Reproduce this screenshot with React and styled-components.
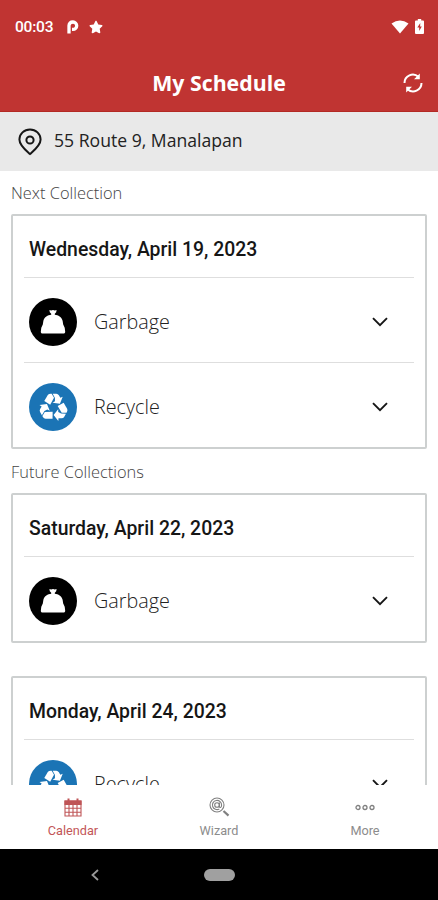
import React from "react";
import styled, { createGlobalStyle } from "styled-components";
import { FaStar } from "react-icons/fa";

const collections = [
  {
    label: "Next Collection",
    days: [{ date: "Wednesday, April 19, 2023", items: ["Garbage", "Recycle"] }],
  },
  {
    label: "Future Collections",
    days: [
      { date: "Saturday, April 22, 2023", items: ["Garbage"] },
      { date: "Monday, April 24, 2023", items: ["Recycle"] },
    ],
  },
];

const BagIcon = () => (
  <svg width="26" height="26" viewBox="0 0 26 26" fill="#fff">
    <path d="M9.400 1l1.800.6 1.800-.5 1.800.5 1.800-.6-.4 2.200-1.400 1.500v1.100c3.400.3 6.900 2.200 7.800 6l.6 3.600 1.500 3.300.5 4c0 1.200-.6 1.800-1.800 1.800H2.600c-1.200 0-1.800-.6-1.800-1.800l.5-4 1.500-3.300.6-3.600C4.300 8 7.800 6.100 11.200 5.800V4.700L9.800 3.200z" />
  </svg>
);

const RecycleIcon = () => (
  <svg width="29" height="29" viewBox="0 0 28 28" fill="#fff">
    {[0, 120, 240].map((angle) => (
      <g key={angle} transform={`rotate(${angle} 14 15)`}>
        <path d="M5.100 8.800L8.500 3Q9.400 1.600 11.300 1.600H12.200L14.500 5.600L10.800 12.200z" />
        <path d="M13.200 1.600H16.700Q18.300 1.600 19.200 3.100L20.600 5.600L22.900 4.500L20.200 11.300L13.100 10.300L15.400 8.900V5.700z" />
      </g>
    ))}
  </svg>
);

const Chevron = () => (
  <svg width="16" height="10" viewBox="0 0 16 10" fill="none" stroke="#161616" strokeWidth="1.9">
    <path d="M1 1.200l7 7L15 1.200" />
  </svg>
);

const PinIcon = () => (
  <svg width="24" height="28" viewBox="0 0 24 28" fill="none" stroke="#161616" strokeWidth="2">
    <path d="M12 26C8 22.500 1.400 17.500 1.400 11.500a10.600 10.100 0 0 1 21.200 0C22.600 17.500 16 22.500 12 26z" />
    <circle cx="12" cy="12" r="3.600" />
  </svg>
);

const SyncIcon = () => (
  <svg width="20" height="20" viewBox="0 0 20 20" fill="none" stroke="#fff" strokeWidth="2">
    <path d="M1.500 10A8.300 8.300 0 0 1 15.400 3.800M18.500 10A8.300 8.300 0 0 1 4.600 16.200" />
    <path d="M16.800 .6v5.600H11zM3.200 19.400V13.800H9z" fill="#fff" stroke="none" />
  </svg>
);

const CalendarIcon = () => (
  <svg width="18" height="19" viewBox="0 0 18 19" fill="none" stroke="#bf5557" strokeWidth="1.100">
    <path d="M1 3h16v15H1zM1 6.500h16M1 10.300h16M1 14.200h16M5 6.500V18M9 6.500V18M13 6.500V18" />
    <path d="M1 3h16v3.500H1z" fill="#bf5557" />
    <path d="M4.500 .5v4M13.500 .5v4" strokeWidth="2" />
  </svg>
);

const WizardIcon = () => (
  <svg width="21" height="20" viewBox="0 0 21 20" fill="none" stroke="#808080" strokeWidth="1.100">
    <circle cx="8" cy="8" r="7" />
    <circle cx="8" cy="8" r="2.300" />
    <path d="M10.400 5.600v3.600c0 2 2.200 1.600 2.200-1A4.600 4.600 0 1 0 10.300 12" />
    <path d="M14.500 14l5 4.600" strokeWidth="2.200" />
  </svg>
);

const MoreIcon = () => (
  <svg width="20" height="7" viewBox="0 0 20 7" fill="none" stroke="#808080" strokeWidth="1.300">
    <circle cx="3" cy="3.500" r="2" />
    <circle cx="10" cy="3.500" r="2" />
    <circle cx="17" cy="3.500" r="2" />
  </svg>
);

const tabs = [
  { name: "Calendar", icon: <CalendarIcon />, active: true },
  { name: "Wizard", icon: <WizardIcon /> },
  { name: "More", icon: <MoreIcon /> },
];

const App = () => {
  return (
    <Screen>
      <GlobalStyle />
      <Header>
        <StatusBar>
          <Clock>00:03</Clock>
          <svg className="parking" width="12" height="14" viewBox="0 0 12 14" fill="none" stroke="#fff" strokeWidth="3.300">
            <path d="M2 13.500V5.500Q2 2 6 2a3.700 3.700 0 1 1 0 7.400H5" />
          </svg>
          <FaStar className="star" />
          <Signals>
            <svg width="18" height="14" viewBox="0 0 18 14" fill="#fff">
              <path d="M.5 3.500Q9-2.700 17.500 3.500L9 13.500z" />
            </svg>
            <svg width="9" height="15" viewBox="0 0 9 15">
              <path d="M2.800 0h3.400v1.500H8q1 0 1 1V14q0 1-1 1H1q-1 0-1-1V2.500q0-1 1-1h1.800z" fill="#fff" />
              <path d="M5.300 4 2.300 8.500h1.900V12l2.600-4.500H5.100z" fill="#c03432" />
            </svg>
          </Signals>
        </StatusBar>
        <TitleBar>
          <Title>My Schedule</Title>
          <SyncIcon />
        </TitleBar>
      </Header>
      <Address>
        <PinIcon />
        <span>55 Route 9, Manalapan</span>
      </Address>
      <Content>
        {collections.map(({ label, days }) => (
          <section key={label}>
            <Label>{label}</Label>
            <Days>
              {days.map(({ date, items }) => (
                <Card key={date}>
                  <CardDate>{date}</CardDate>
                  {items.map((item) => (
                    <Row key={item}>
                      <Badge $kind={item}>
                        {item === "Garbage" ? <BagIcon /> : <RecycleIcon />}
                      </Badge>
                      <RowName>{item}</RowName>
                      <Chevron />
                    </Row>
                  ))}
                </Card>
              ))}
            </Days>
          </section>
        ))}
      </Content>
      <TabBar>
        {tabs.map(({ name, icon, active }) => (
          <Tab key={name} $active={active}>
            <TabIcon>{icon}</TabIcon>
            {name}
          </Tab>
        ))}
      </TabBar>
      <SystemNav>
        <svg width="8" height="12" viewBox="0 0 8 12" fill="none" stroke="#999" strokeWidth="1.800">
          <path d="M7 1 1.500 6 7 11" />
        </svg>
        <HomePill />
      </SystemNav>
    </Screen>
  );
};

const GlobalStyle = createGlobalStyle`
  * {
    box-sizing: border-box;
  }
  body {
    margin: 0;
  }
  svg {
    display: block;
    flex-shrink: 0;
  }
`;

const Screen = styled.div`
  display: flex;
  flex-direction: column;
  width: 438px;
  height: 900px;
  overflow: hidden;
  background: #fff;
  font-family: "Open Sans", "Noto Sans", sans-serif;
`;

const Header = styled.header`
  flex: none;
  height: 112px;
  background: #c03432;
  border-bottom: 1px solid #b32a24;
  color: #fff;
`;

const StatusBar = styled.div`
  display: flex;
  align-items: center;
  height: 53px;
  padding: 0 14px 0 15px;

  .parking {
    margin-left: 13px;
  }
  .star {
    width: 14px;
    height: 14px;
    margin-left: 10px;
  }
`;

const Clock = styled.span`
  width: 39px;
  font-family: Roboto, sans-serif;
  font-size: 15.5px;
  font-weight: 500;
  letter-spacing: -0.2px;
  white-space: nowrap;
`;

const Signals = styled.div`
  display: flex;
  align-items: center;
  gap: 6px;
  margin-left: auto;
`;

const TitleBar = styled.div`
  display: grid;
  grid-template-columns: 1fr auto 1fr;
  align-items: center;
  height: 59px;
  padding: 0 15px;

  svg {
    grid-column: 3;
    justify-self: end;
  }
`;

const Title = styled.h1`
  grid-column: 2;
  margin: 0;
  font-size: 21.3px;
  font-weight: 700;
  white-space: nowrap;
`;

const Address = styled.div`
  display: flex;
  flex: none;
  align-items: center;
  gap: 12px;
  height: 59px;
  padding-left: 18px;
  background: #e9e9e9;
  color: #222;
  font-size: 17.6px;
  white-space: nowrap;

  span {
    padding-bottom: 3px;
  }
`;

const Content = styled.main`
  flex: 1;
  min-height: 0;
  padding: 0 11px;
  overflow: hidden;

  section:first-child h2 {
    height: 43px;
    line-height: 43px;
  }
`;

const Label = styled.h2`
  height: 44px;
  margin: 0;
  color: #444;
  font-size: 16.4px;
  font-weight: 300;
  line-height: 45px;
`;

const Days = styled.div`
  display: flex;
  flex-direction: column;
  gap: 33px;
`;

const Card = styled.article`
  padding: 0 11px;
  border: 2px solid #cdd0d0;
  border-radius: 2px;
`;

const CardDate = styled.h3`
  height: 61px;
  margin: 0;
  padding-left: 5px;
  color: #161616;
  font-family: Roboto, sans-serif;
  font-size: 19.4px;
  font-weight: 500;
  line-height: 68px;
  white-space: nowrap;
`;

const Row = styled.div`
  display: flex;
  align-items: center;
  height: 85px;
  padding: 3px 26px 0 5px;
  border-top: 1px solid #dedede;

  > svg {
    margin-top: 1px;
  }
`;

const Badge = styled.div`
  display: flex;
  align-items: center;
  justify-content: center;
  width: 48px;
  height: 48px;
  border-radius: 50%;
  background: ${({ $kind }) => ($kind === "Garbage" ? "#000" : "#1b74b5")};
`;

const RowName = styled.span`
  flex: 1;
  margin-left: 17px;
  padding-bottom: 1px;
  color: #222;
  font-size: 19.8px;
  font-weight: 300;
`;

const TabBar = styled.nav`
  display: grid;
  flex: none;
  grid-template-columns: repeat(3, 1fr);
  height: 64px;
  background: #fff;
`;

const Tab = styled.div`
  display: flex;
  flex-direction: column;
  align-items: center;
  padding-top: 12px;
  color: ${({ $active }) => ($active ? "#c25557" : "#8c8c8c")};
  font-family: Roboto, sans-serif;
  font-size: 12.7px;
  line-height: 18px;
`;

const TabIcon = styled.div`
  display: flex;
  align-items: center;
  height: 20px;
  margin-bottom: 5px;
`;

const SystemNav = styled.footer`
  display: grid;
  flex: none;
  grid-template-columns: 1fr 31px 1fr;
  align-items: center;
  height: 51px;
  background: #000;

  svg {
    margin-left: 91px;
  }
`;

const HomePill = styled.div`
  height: 12px;
  border-radius: 6px;
  background: #a0a0a0;
`;

export default App;
